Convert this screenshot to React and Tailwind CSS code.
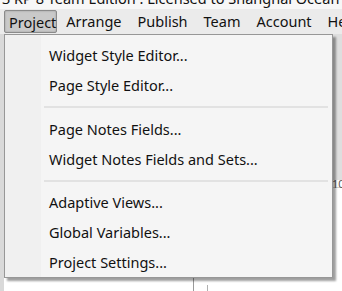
const groups = [
  ["Widget Style Editor...", "Page Style Editor..."],
  ["Page Notes Fields...", "Widget Notes Fields and Sets..."],
  ["Adaptive Views...", "Global Variables...", "Project Settings..."],
];

const menus = ["Project", "Arrange", "Publish", "Team", "Account", "Help"];

export default function App() {
  return (
    <div
      className="relative w-[342px] h-[291px] overflow-hidden bg-white text-[#111]"
      style={{ fontFamily: '"Noto Sans", "Open Sans", sans-serif' }}
    >
      {/* window title, cut off at the top */}
      <div className="h-[9px] overflow-hidden bg-[#f7f7f7]">
        <div className="-mt-[11px] pl-[2px] text-[14.5px] leading-[18px] whitespace-nowrap">
          3 RP 8 Team Edition : Licensed to Shanghai Ocean
        </div>
      </div>

      {/* menu bar */}
      <div className="flex h-[25px] items-start bg-[#ebebeb] pl-[4px] pt-[1px] text-[14.5px] leading-[22px] whitespace-nowrap">
        {menus.map((m, i) => (
          <div
            key={m}
            className={
              i === 0
                ? "mr-[1px] h-[23px] w-[59px] rounded-[2px] border border-[#8a8a8a] bg-[#c9c9c9] pl-[4px] shadow-[inset_0_0_2px_rgba(0,0,0,0.25)]"
                : "h-[23px] px-[8px]"
            }
          >
            {m}
          </div>
        ))}
      </div>

      {/* content behind the menu */}
      <div className="flex h-[257px]">
        <div className="w-[4px] bg-[#d9d9d9]" />
        <div className="flex-1" />
        <div className="flex w-[10px] flex-col">
          <div className="h-[146px] border-l border-[#c8c8c8] bg-[#dedede]" />
          <div className="h-[8px] border-b border-[#d0d0d0] text-[11px] leading-[8px] text-[#555]">10</div>
        </div>
      </div>
      <div className="absolute left-[193px] top-[278px] h-[13px] w-px bg-[#9a9a9a]" />
      <div className="absolute left-[207px] top-[285px] h-[6px] w-px bg-[#b0b0b0]" />

      {/* dropdown */}
      <div className="absolute left-[4px] top-[34px] w-[329px] border border-[#979797] bg-[#f5f5f5] shadow-[3px_3px_2px_rgba(0,0,0,0.38)]">
        <div className="absolute bottom-0 left-0 top-0 w-[36px] bg-[#f0f0f0]" />
        <div className="relative pt-[5px] text-[14.5px] leading-[30px]">
          {groups.map((g, gi) => (
            <div key={gi}>
              {gi > 0 && (
                <div className={gi === 1 ? "flex h-[14px] items-center" : "flex h-[13px] items-center"}>
                  <div className="ml-[39px] mr-[4px] h-[2px] flex-1 bg-[#e2e2e2]" />
                </div>
              )}
              {g.map((t) => (
                <div key={t} className="h-[30px] pl-[44px] whitespace-nowrap">
                  {t}
                </div>
              ))}
            </div>
          ))}
        </div>
      </div>
    </div>
  );
}
